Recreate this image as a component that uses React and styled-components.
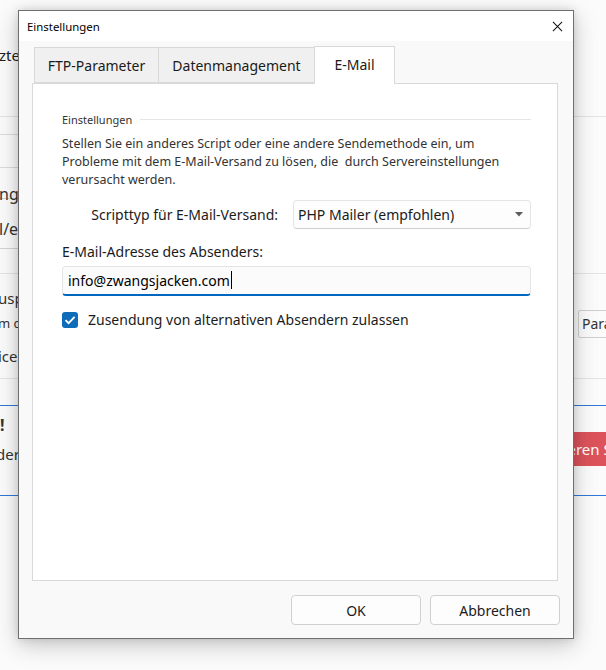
import styled, { createGlobalStyle } from "styled-components";

const GlobalStyle = createGlobalStyle`
  body {
    margin: 0;
    background: #fbfbfb;
    font-family: "Noto Sans", "Segoe UI", sans-serif;
  }
`;

function App() {
  return (
    <Screen>
      <GlobalStyle />
      <Backdrop>
        <Hero>ztes</Hero>
        <FormArea>
          <LeftCol>
            <Rule $h={17} />
            <Rule $h={32} />
            <FieldRow $h={30} $pad={16}>ngs_</FieldRow>
            <FieldRow $h={49} $pad={20}>l/e</FieldRow>
          </LeftCol>
        </FormArea>
        <InfoArea>
          <InfoText>
            <span className="big">uspa</span>
            <span className="small">m c</span>
            <span className="big">ice,</span>
          </InfoText>
          <GhostButton>Parameter</GhostButton>
        </InfoArea>
        <Alert>
          <AlertText>
            <strong>!</strong>
            <span>der</span>
          </AlertText>
          <DangerButton>Aktivieren Sie</DangerButton>
        </Alert>
      </Backdrop>

      <Dialog>
        <TitleBar>
          <span>Einstellungen</span>
          <CloseIcon viewBox="0 0 12 12">
            <path d="M1 1 L11 11 M11 1 L1 11" stroke="#111" strokeWidth="1.1" />
          </CloseIcon>
        </TitleBar>
        <Body>
          <Tabs>
            <Tab $w={125}>FTP-Parameter</Tab>
            <Tab $w={157}>Datenmanagement</Tab>
            <Tab $w={81} $active>
              E-Mail
            </Tab>
          </Tabs>
          <Panel>
            <GroupHeader>
              <span>Einstellungen</span>
              <i />
            </GroupHeader>
            <Hint>
              Stellen Sie ein anderes Script oder eine andere Sendemethode ein, um
              Probleme mit dem E-Mail-Versand zu lösen, die&nbsp; durch
              Servereinstellungen verursacht werden.
            </Hint>
            <SelectRow>
              <FieldLabel>Scripttyp für E-Mail-Versand:</FieldLabel>
              <Select>
                <span>PHP Mailer (empfohlen)</span>
                <Caret viewBox="0 0 8 5">
                  <path d="M0 0 L8 0 L4 4.5 Z" fill="#5c5c5c" />
                </Caret>
              </Select>
            </SelectRow>
            <StackLabel>E-Mail-Adresse des Absenders:</StackLabel>
            <TextInput>
              info@zwangsjacken.com
              <TextCursor />
            </TextInput>
            <CheckRow>
              <CheckBox>
                <svg viewBox="0 0 16 16" width="16" height="16">
                  <path
                    d="M3.5 8.2 L6.6 11.2 L12.6 4.8"
                    fill="none"
                    stroke="#fff"
                    strokeWidth="1.8"
                  />
                </svg>
              </CheckBox>
              <span>Zusendung von alternativen Absendern zulassen</span>
            </CheckRow>
          </Panel>
          <Footer>
            <Button>OK</Button>
            <Button>Abbrechen</Button>
          </Footer>
        </Body>
      </Dialog>
    </Screen>
  );
}

const Screen = styled.div`
  position: relative;
  width: 606px;
  height: 670px;
  overflow: hidden;
  background: #fbfbfb;
`;

/* ---------- page behind the dialog ---------- */

const Backdrop = styled.div`
  display: flex;
  flex-direction: column;
  color: #333;
  font-size: 15px;
`;

const Hero = styled.div`
  height: 117px;
  box-sizing: border-box;
  padding-top: 44px;
  line-height: 22px;
  margin-left: -1px;
  color: #222;
  border-bottom: 1px solid #e4e4e4;
`;

const FormArea = styled.div`
  display: flex;
  height: 156px;
  border-bottom: 1px solid #e4e4e4;
`;

const LeftCol = styled.div`
  width: 300px;
  display: flex;
  flex-direction: column;
`;

const Rule = styled.div`
  height: ${(p) => p.$h}px;
  border-bottom: 1px solid #dcdcdc;
`;

const FieldRow = styled.div`
  height: ${(p) => p.$h}px;
  box-sizing: content-box;
  padding-top: 0;
  border-bottom: 1px solid #d4d4d4;
  margin-left: -1px;
  font-size: 16px;
  line-height: 20px;
  overflow: visible;

  &::before {
    content: "";
    display: block;
    height: ${(p) => p.$pad}px;
  }
`;

const InfoArea = styled.div`
  display: flex;
  justify-content: space-between;
  height: 104px;
  border-bottom: 1px solid #e4e4e4;
  margin-bottom: 26px;
`;

const InfoText = styled.div`
  display: flex;
  flex-direction: column;
  padding-top: 13px;
  margin-left: -2px;

  .big {
    line-height: 22px;
  }
  .small {
    font-size: 13px;
    line-height: 28px;
    margin-bottom: 8px;
  }
`;

const GhostButton = styled.div`
  align-self: flex-start;
  margin-top: 36px;
  width: 80px;
  height: 28px;
  margin-right: -52px;
  box-sizing: border-box;
  border: 1px solid #d0d0d0;
  border-radius: 2px;
  padding-left: 3px;
  font-size: 14px;
  line-height: 26px;
  color: #333;
`;

const Alert = styled.div`
  display: flex;
  justify-content: space-between;
  height: 89px;
  border-top: 1px solid #2f78d8;
  border-bottom: 1px solid #2f78d8;
`;

const AlertText = styled.div`
  display: flex;
  flex-direction: column;
  padding-top: 8px;
  margin-left: -4px;

  strong {
    font-size: 16px;
    line-height: 22px;
    margin: 0 0 8px 4px;
  }
`;

const DangerButton = styled.div`
  align-self: flex-start;
  margin-top: 26px;
  height: 34px;
  margin-right: -36px;
  padding: 0 18px;
  background: #dc535b;
  color: #fff;
  font-size: 15px;
  line-height: 34px;
  border-radius: 3px;
`;

/* ---------- dialog ---------- */

const Dialog = styled.div`
  position: absolute;
  left: 18px;
  top: 10px;
  width: 556px;
  height: 629px;
  box-sizing: border-box;
  border: 1px solid #6f6f6f;
  background: #f9f9f9;
  box-shadow: 0 6px 22px rgba(0, 0, 0, 0.22), 0 0 8px rgba(0, 0, 0, 0.12);
  display: flex;
  flex-direction: column;
  color: #1b1b1b;
`;

const TitleBar = styled.div`
  height: 30px;
  flex: none;
  background: #fff;
  display: flex;
  align-items: center;
  justify-content: space-between;
  padding: 0 10px 0 8px;
  font-size: 11.4px;
  color: #000;
`;

const CloseIcon = styled.svg`
  width: 11px;
  height: 11px;
`;

const Body = styled.div`
  flex: 1;
  display: flex;
  flex-direction: column;
  padding: 5px 15px 0 13px;
`;

const Tabs = styled.div`
  display: flex;
  align-items: flex-end;
  height: 37px;
  padding-left: 2px;
  position: relative;
  z-index: 1;
`;

const Tab = styled.div`
  width: ${(p) => p.$w}px;
  height: ${(p) => (p.$active ? 38 : 36)}px;
  box-sizing: border-box;
  margin-bottom: ${(p) => (p.$active ? -1 : 0)}px;
  margin-left: -1px;
  border: 1px solid #d9d9d9;
  border-bottom: ${(p) => (p.$active ? "none" : "1px solid #d9d9d9")};
  background: ${(p) => (p.$active ? "#fff" : "#f0f0f0")};
  display: flex;
  align-items: center;
  justify-content: center;
  padding-bottom: ${(p) => (p.$active ? 2 : 0)}px;
  font-size: 14px;
  color: #1a1a1a;

  &:first-child {
    margin-left: 0;
  }
`;

const Panel = styled.div`
  flex: 1;
  background: #fff;
  border: 1px solid #d9d9d9;
  padding: 27px 26px 0 29px;
  display: flex;
  flex-direction: column;
`;

const GroupHeader = styled.div`
  display: flex;
  align-items: center;
  gap: 8px;
  font-size: 11px;
  color: #333;
  height: 16px;

  i {
    flex: 1;
    height: 1px;
    background: #e5e5e5;
  }
`;

const Hint = styled.p`
  margin: 8px 0 0;
  font-size: 12.5px;
  line-height: 18px;
  color: #333;
`;

const SelectRow = styled.div`
  display: grid;
  grid-template-columns: 216px 1fr;
  column-gap: 15px;
  align-items: center;
  margin-top: 11px;
`;

const FieldLabel = styled.span`
  text-align: right;
  font-size: 14px;
  color: #1b1b1b;
`;

const Select = styled.div`
  height: 29px;
  box-sizing: border-box;
  border: 1px solid #e5e5e5;
  border-bottom-color: #cfcfcf;
  border-radius: 4px;
  background: #fdfdfd;
  display: flex;
  align-items: center;
  justify-content: space-between;
  padding: 0 7px 0 4px;
  font-size: 14px;
  color: #1b1b1b;
`;

const Caret = styled.svg`
  width: 8px;
  height: 5px;
`;

const StackLabel = styled.div`
  margin-top: 13px;
  font-size: 14px;
  line-height: 20px;
  color: #1b1b1b;
`;

const TextInput = styled.div`
  margin-top: 4px;
  height: 30px;
  box-sizing: border-box;
  border: 1px solid #e5e5e5;
  border-bottom: 2px solid #0067c0;
  border-radius: 4px;
  background: #fbfbfb;
  display: flex;
  align-items: center;
  padding: 0 5px 1px;
  font-size: 14px;
  color: #000;
`;

const TextCursor = styled.span`
  width: 1px;
  height: 18px;
  background: #000;
  margin-left: 1px;
`;

const CheckRow = styled.label`
  margin-top: 14px;
  display: flex;
  align-items: center;
  gap: 10px;
  font-size: 14px;
  color: #1b1b1b;
`;

const CheckBox = styled.span`
  width: 16px;
  height: 16px;
  border-radius: 3px;
  background: #0f6cb8;
  display: flex;
`;

const Footer = styled.div`
  height: 57px;
  flex: none;
  display: flex;
  justify-content: flex-end;
  align-items: flex-start;
  gap: 9px;
  padding-top: 14px;
  box-sizing: border-box;
  margin-right: -2px;
`;

const Button = styled.button`
  width: 130px;
  height: 30px;
  border: 1px solid #d0d0d0;
  border-radius: 4px;
  background: #fdfdfd;
  font-family: inherit;
  font-size: 14px;
  color: #1b1b1b;
  padding: 0;
`;

export default App;
